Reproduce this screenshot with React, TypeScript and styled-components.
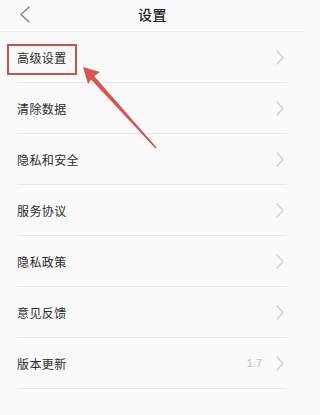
import React from "react";
import styled, { createGlobalStyle } from "styled-components";

const GlobalStyle = createGlobalStyle`
  html, body {
    margin: 0;
    padding: 0;
    background: #fafafa;
  }
  body {
    font-family: "Noto Sans CJK SC", "Noto Sans", sans-serif;
  }
`;

const Page = styled.div`
  position: relative;
  width: 305px;
  height: 415px;
  background: #fafafa;
  overflow: hidden;
`;

const Header = styled.div`
  position: relative;
  height: 32px;
  display: flex;
  align-items: center;
  justify-content: center;
  padding-bottom: 4px;
  box-sizing: border-box;
  border-bottom: 1px solid #ebebeb;
`;

const BackButton = styled.div`
  position: absolute;
  left: 19px;
  top: 6px;
  width: 12px;
  height: 17px;
  display: flex;
`;

const Title = styled.div`
  font-size: 14px;
  font-weight: 500;
  color: #222;
  letter-spacing: 0.5px;
`;

const List = styled.div`
  display: flex;
  flex-direction: column;
`;

const Row = styled.div`
  height: 50px;
  margin: 0 18px 0 17px;
  display: flex;
  align-items: center;
  border-bottom: 1px solid #e6e6e6;
`;

const Label = styled.span`
  flex: 1;
  font-size: 12px;
  color: #2a2a2a;
  letter-spacing: 0.4px;
`;

const Value = styled.span`
  font-family: "Liberation Sans", Arial, sans-serif;
  font-size: 11px;
  color: #bdbdbd;
  margin-right: 14px;
`;

const Chevron = styled.svg`
  width: 8px;
  height: 15px;
  margin-right: 3px;
`;

const Highlight = styled.div`
  position: absolute;
  left: 7px;
  top: 44px;
  width: 70px;
  height: 31px;
  box-sizing: border-box;
  border: 2.5px solid #c9524f;
`;

const ArrowLayer = styled.svg`
  position: absolute;
  left: 0;
  top: 0;
  pointer-events: none;
`;

const items: { label: string; value?: string }[] = [
  { label: "高级设置" },
  { label: "清除数据" },
  { label: "隐私和安全" },
  { label: "服务协议" },
  { label: "隐私政策" },
  { label: "意见反馈" },
  { label: "版本更新", value: "1.7" },
];

const App: React.FC = () => {
  return (
    <Page>
      <GlobalStyle />
      <Header>
        <BackButton>
          <svg width="12" height="17" viewBox="0 0 12 17">
            <polyline
              points="10,1 2,8.5 10,16"
              fill="none"
              stroke="#8a8a8a"
              strokeWidth="1.6"
              strokeLinecap="round"
              strokeLinejoin="round"
            />
          </svg>
        </BackButton>
        <Title>设置</Title>
      </Header>
      <List>
        {items.map((item) => (
          <Row key={item.label}>
            <Label>{item.label}</Label>
            {item.value && <Value>{item.value}</Value>}
            <Chevron viewBox="0 0 8 15">
              <polyline
                points="1,1 7,7.5 1,14"
                fill="none"
                stroke="#cfcfcf"
                strokeWidth="1.2"
                strokeLinecap="round"
                strokeLinejoin="round"
              />
            </Chevron>
          </Row>
        ))}
      </List>
      <Highlight />
      <ArrowLayer width="305" height="415" viewBox="0 0 305 415">
        {/* tapered shaft */}
        <polygon
          points="89.2,77.6 92.8,74.4 156.6,147.4 155.4,148.6"
          fill="#d9534f"
        />
        <polygon points="83,67 100,72 93.5,76.5 88,84" fill="#d9534f" />
      </ArrowLayer>
    </Page>
  );
};

export default App;
